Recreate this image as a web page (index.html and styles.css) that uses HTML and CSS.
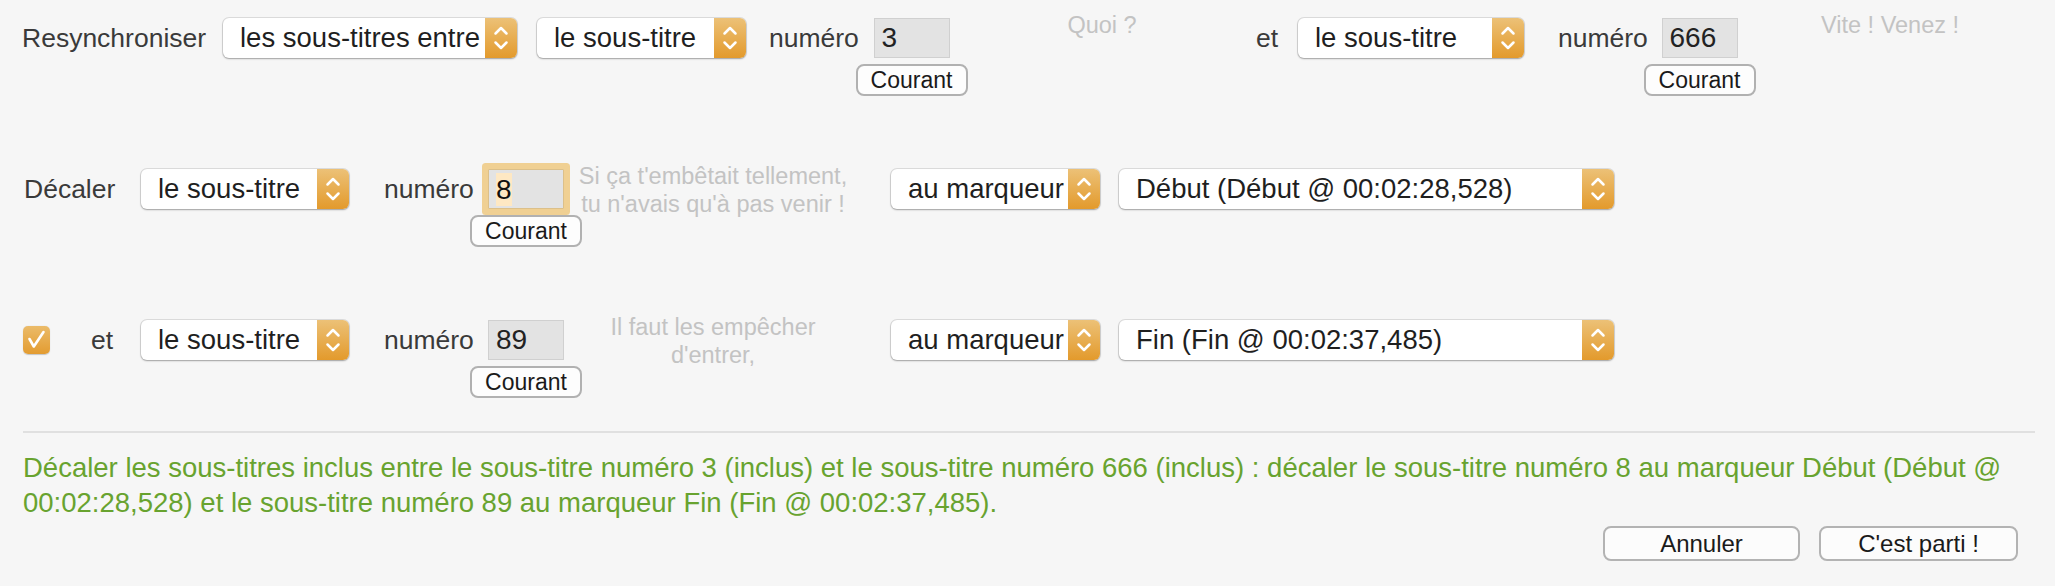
FILE: index.html
```html
<!DOCTYPE html>
<html lang="fr">
<head>
<meta charset="utf-8">
<title>Resynchroniser</title>
<link rel="stylesheet" href="styles.css">
</head>
<body>
<div class="dialog">
  <div class="rows">
    <div class="row row-1">
      <span class="lbl w-resync">Resynchroniser</span>
      <div class="popup w-p1 ml-16"><span class="ptext">les sous-titres entre</span><span class="stepper"><svg viewBox="0 0 32 40" width="32" height="40"><path d="M10.5 15.5 L16 10 L21.5 15.5 M10.5 24.5 L16 30 L21.5 24.5"/></svg></span></div>
      <div class="popup w-p2 ml-20"><span class="ptext">le sous-titre</span><span class="stepper"><svg viewBox="0 0 32 40" width="32" height="40"><path d="M10.5 15.5 L16 10 L21.5 15.5 M10.5 24.5 L16 30 L21.5 24.5"/></svg></span></div>
      <span class="lbl w-num ml-23">numéro</span>
      <div class="stack ml-m5"><div class="field">3</div><button class="small-btn">Courant</button></div>
      <div class="hint w-h1 ml-14">Quoi ?</div>
      <span class="lbl w-et ml-34">et</span>
      <div class="popup w-p3 ml-20"><span class="ptext">le sous-titre</span><span class="stepper"><svg viewBox="0 0 32 40" width="32" height="40"><path d="M10.5 15.5 L16 10 L21.5 15.5 M10.5 24.5 L16 30 L21.5 24.5"/></svg></span></div>
      <span class="lbl w-num2 ml-34">numéro</span>
      <div class="stack ml-m4"><div class="field">666</div><button class="small-btn">Courant</button></div>
      <div class="hint w-h1 ml-14">Vite ! Venez !</div>
    </div>

    <div class="row row-2">
      <span class="lbl w-decaler">Décaler</span>
      <div class="popup w-p4 ml-22"><span class="ptext">le sous-titre</span><span class="stepper"><svg viewBox="0 0 32 40" width="32" height="40"><path d="M10.5 15.5 L16 10 L21.5 15.5 M10.5 24.5 L16 30 L21.5 24.5"/></svg></span></div>
      <span class="lbl w-num2 ml-35">numéro</span>
      <div class="stack stack-b ml-m3"><div class="field focused"><span class="sel">8</span></div><button class="small-btn">Courant</button></div>
      <div class="hint w-h2 ml-m14">Si ça t'embêtait tellement,<br>tu n'avais qu'à pas venir !</div>
      <div class="popup w-p5 ml-33"><span class="ptext">au marqueur</span><span class="stepper"><svg viewBox="0 0 32 40" width="32" height="40"><path d="M10.5 15.5 L16 10 L21.5 15.5 M10.5 24.5 L16 30 L21.5 24.5"/></svg></span></div>
      <div class="popup w-p6 ml-19"><span class="ptext">Début (Début @ 00:02:28,528)</span><span class="stepper"><svg viewBox="0 0 32 40" width="32" height="40"><path d="M10.5 15.5 L16 10 L21.5 15.5 M10.5 24.5 L16 30 L21.5 24.5"/></svg></span></div>
    </div>

    <div class="row row-3">
      <span class="check"><svg viewBox="0 0 27 28" width="27" height="28"><path d="M6.5 13 L10.8 20.5 L20.5 6"/></svg></span>
      <span class="lbl w-et ml-41">et</span>
      <div class="popup w-p4 ml-28"><span class="ptext">le sous-titre</span><span class="stepper"><svg viewBox="0 0 32 40" width="32" height="40"><path d="M10.5 15.5 L16 10 L21.5 15.5 M10.5 24.5 L16 30 L21.5 24.5"/></svg></span></div>
      <span class="lbl w-num2 ml-35">numéro</span>
      <div class="stack stack-b ml-m3"><div class="field">89</div><button class="small-btn">Courant</button></div>
      <div class="hint w-h2 ml-m14">Il faut les empêcher<br>d'entrer,</div>
      <div class="popup w-p5 ml-33"><span class="ptext">au marqueur</span><span class="stepper"><svg viewBox="0 0 32 40" width="32" height="40"><path d="M10.5 15.5 L16 10 L21.5 15.5 M10.5 24.5 L16 30 L21.5 24.5"/></svg></span></div>
      <div class="popup w-p6 ml-19"><span class="ptext">Fin (Fin @ 00:02:37,485)</span><span class="stepper"><svg viewBox="0 0 32 40" width="32" height="40"><path d="M10.5 15.5 L16 10 L21.5 15.5 M10.5 24.5 L16 30 L21.5 24.5"/></svg></span></div>
    </div>
  </div>

  <div class="separator"></div>

  <p class="summary">Décaler les sous-titres inclus entre le sous-titre numéro 3 (inclus) et le sous-titre numéro 666 (inclus) : décaler le sous-titre numéro 8 au marqueur Début (Début @ 00:02:28,528) et le sous-titre numéro 89 au marqueur Fin (Fin @ 00:02:37,485).</p>

  <div class="actions">
    <button class="btn w-cancel">Annuler</button>
    <button class="btn w-go">C'est parti !</button>
  </div>
</div>
</body>
</html>
```

FILE: styles.css
```css
html, body {
  margin: 0;
  padding: 0;
  background: #f6f6f6;
}

body {
  font-family: "Liberation Sans", Arial, Helvetica, sans-serif;
  color: #3b3b3b;
  width: 2055px;
  height: 586px;
  overflow: hidden;
}

.dialog {
  padding-top: 18px;
}

.rows {
  display: flex;
  flex-direction: column;
  gap: 73px;
}

.row {
  display: flex;
  align-items: flex-start;
  height: 78px;
}

.row-1 { padding-left: 22px; }
.row-2 { padding-left: 24px; }
.row-3 { padding-left: 23px; }

.lbl {
  display: block;
  height: 40px;
  line-height: 40px;
  font-size: 26.5px;
  color: #3a3a3a;
  white-space: nowrap;
  flex: none;
}

.w-resync { width: 185px; }
.w-num { width: 91px; }
.w-num2 { width: 89px; }
.w-et { width: 22px; }
.w-decaler { width: 95px; }

.ml-14 { margin-left: 14px; }
.ml-16 { margin-left: 16px; }
.ml-19 { margin-left: 19px; }
.ml-20 { margin-left: 20px; }
.ml-22 { margin-left: 22px; }
.ml-23 { margin-left: 23px; }
.ml-28 { margin-left: 28px; }
.ml-33 { margin-left: 33px; }
.ml-34 { margin-left: 34px; }
.ml-35 { margin-left: 35px; }
.ml-41 { margin-left: 41px; }
.ml-m3 { margin-left: -3px; }
.ml-m4 { margin-left: -4px; }
.ml-m5 { margin-left: -5px; }
.ml-m14 { margin-left: -14px; }

/* Pop-up buttons */
.popup {
  flex: none;
  display: flex;
  height: 40px;
  background: #ffffff;
  border-radius: 6px;
  box-shadow: 0 0 0 1px rgba(0, 0, 0, 0.10), 0 1px 2px rgba(0, 0, 0, 0.28);
  overflow: hidden;
}

.ptext {
  flex: 1;
  padding-left: 17px;
  font-size: 27.5px;
  line-height: 40px;
  color: #1f1f1f;
  white-space: nowrap;
  overflow: hidden;
}

.stepper {
  flex: none;
  width: 32px;
  height: 40px;
  background: linear-gradient(#ecc177, #e39a2c);
}

.stepper svg {
  display: block;
}

.stepper path {
  fill: none;
  stroke: #ffffff;
  stroke-width: 2.5;
  stroke-linecap: round;
  stroke-linejoin: round;
}

.w-p1 { width: 294px; }
.w-p2 { width: 209px; }
.w-p3 { width: 226px; }
.w-p4 { width: 208px; }
.w-p5 { width: 209px; }
.w-p6 { width: 495px; }

/* Number field + Courant */
.stack {
  flex: none;
  width: 113px;
  display: flex;
  flex-direction: column;
  align-items: center;
}

.stack-b { width: 112px; }

.field {
  box-sizing: border-box;
  width: 76px;
  height: 40px;
  background: #e3e3e3;
  border: 1px solid #d0d0d0;
  padding-left: 7px;
  font-size: 28px;
  line-height: 38px;
  color: #222222;
}

.field.focused {
  box-shadow: 0 0 0 6px #f0d093;
  border-radius: 1px;
  border-color: #dcc08a;
  display: flex;
  align-items: center;
}

.sel {
  display: inline-block;
  height: 33px;
  line-height: 33px;
  background: #fee8c3;
  color: #111111;
}

.small-btn {
  box-sizing: border-box;
  margin-top: 6px;
  width: 112px;
  height: 32px;
  padding: 0;
  background: #fdfdfd;
  border: 2px solid #b1b1b1;
  border-radius: 8px;
  font-family: "Liberation Sans", Arial, Helvetica, sans-serif;
  font-size: 23px;
  line-height: 28px;
  color: #1a1a1a;
}

/* Hints */
.hint {
  flex: none;
  margin-top: -7px;
  font-size: 23.5px;
  line-height: 28px;
  color: #c3c3c3;
  text-align: center;
  white-space: nowrap;
}

.w-h1 { width: 240px; }
.w-h2 { width: 290px; }

/* Checkbox */
.check {
  flex: none;
  margin-top: 6px;
  width: 27px;
  height: 28px;
  border-radius: 5px;
  background: linear-gradient(#ebbb69, #e39c31);
  box-shadow: 0 0.5px 1px rgba(0, 0, 0, 0.2);
}

.check svg {
  display: block;
}

.check path {
  fill: none;
  stroke: #ffffff;
  stroke-width: 2.6;
  stroke-linecap: round;
  stroke-linejoin: round;
}

/* Separator & summary */
.separator {
  margin: 33px 20px 0 23px;
  height: 2px;
  background: #e0e0e0;
}

.summary {
  margin: 17px 20px 0 23px;
  font-size: 27.5px;
  line-height: 35px;
  color: #68a32f;
}

/* Action buttons */
.actions {
  display: flex;
  justify-content: flex-end;
  gap: 19px;
  margin-top: 6px;
  padding-right: 37px;
}

.btn {
  box-sizing: border-box;
  height: 35px;
  padding: 0;
  background: #fcfcfc;
  border: 2px solid #b3b3b3;
  border-radius: 8px;
  font-family: "Liberation Sans", Arial, Helvetica, sans-serif;
  font-size: 24px;
  line-height: 31px;
  color: #1a1a1a;
}

.w-cancel { width: 197px; }
.w-go { width: 199px; }
```
